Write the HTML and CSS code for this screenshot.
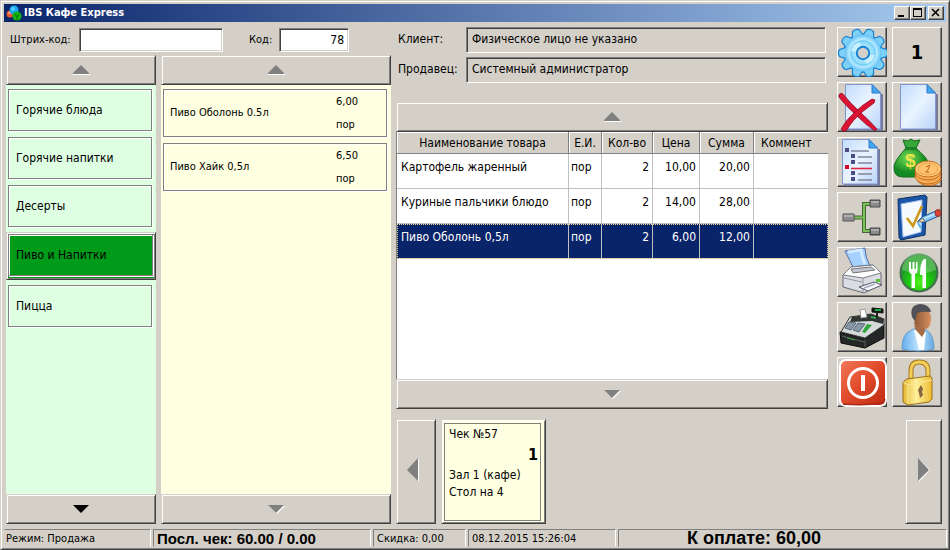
FILE: index.html
```html
<!DOCTYPE html>
<html lang="ru">
<head>
<meta charset="utf-8">
<title>IBS Кафе Express</title>
<link rel="stylesheet" href="styles.css">
</head>
<body>
<div class="window">
  <header class="titlebar">
    <svg class="logo" viewBox="0 0 16 16" aria-hidden="true">
      <circle cx="4" cy="9" r="3.5" fill="#e8562f"/><circle cx="3.5" cy="8" r="1.5" fill="#ff9478"/>
      <circle cx="8" cy="5" r="4.5" fill="#18a8f0"/><circle cx="7" cy="4" r="2" fill="#58ccff"/>
      <circle cx="11" cy="11" r="4.5" fill="#12b312"/><path d="M9 9l2 3 2-3M11 12v3" stroke="#087008" fill="none"/>
    </svg>
    <h1>IBS Кафе Express</h1>
    <button class="sys" aria-label="Свернуть"><svg viewBox="0 0 14 12"><path d="M3 8h6v2H3z"/></svg></button>
    <button class="sys" aria-label="Развернуть"><svg viewBox="0 0 14 12"><path d="M2 1h9v9H2zM3 3v6h7V3z" fill-rule="evenodd"/></svg></button>
    <button class="sys close" aria-label="Закрыть"><svg viewBox="0 0 14 12"><path d="M3 2l7 7M10 2l-7 7" stroke="#000" stroke-width="1.6"/></svg></button>
  </header>

  <main class="workspace">
    <section class="catalog">
      <form class="codes">
        <label for="barcode">Штрих-код:</label>
        <input id="barcode" class="barcode" type="text">
        <label for="code" class="code-label">Код:</label>
        <input id="code" class="code" type="text" value="78">
      </form>
      <div class="lists">
        <div class="panel groups">
          <button class="scroll" aria-label="Группы вверх"><svg class="arrow" viewBox="0 0 17 10"><path d="M0 9h17v1H0z" fill="#fff"/><path d="M8 0l8 8v1H0V8z" fill="#808080"/></svg></button>
          <div class="items">
            <button class="group"><span>Горячие блюда</span></button>
            <button class="group"><span>Горячие напитки</span></button>
            <button class="group"><span>Десерты</span></button>
            <button class="group selected"><span>Пиво и Напитки</span></button>
            <button class="group"><span>Пицца</span></button>
          </div>
          <button class="scroll" aria-label="Группы вниз"><svg class="arrow" viewBox="0 0 17 10"><path d="M0 1h16L8 9z" fill="#000"/></svg></button>
        </div>
        <div class="panel goods">
          <button class="scroll" aria-label="Товары вверх"><svg class="arrow" viewBox="0 0 17 10"><path d="M0 9h17v1H0z" fill="#fff"/><path d="M8 0l8 8v1H0V8z" fill="#808080"/></svg></button>
          <div class="items">
            <button class="good"><span class="name">Пиво Оболонь 0.5л</span><span class="price">6,00</span><span class="unit">пор</span></button>
            <button class="good"><span class="name">Пиво Хайк 0,5л</span><span class="price">6,50</span><span class="unit">пор</span></button>
          </div>
          <button class="scroll" aria-label="Товары вниз"><svg class="arrow" viewBox="0 0 17 10"><path d="M1 2h16L9 10z" fill="#fff"/><path d="M0 1h16L8 9z" fill="#808080"/></svg></button>
        </div>
      </div>
    </section>

    <section class="sale">
      <div class="upper">
        <div class="order">
          <dl class="party">
            <dt>Клиент:</dt><dd>Физическое лицо не указано</dd>
            <dt>Продавец:</dt><dd>Системный администратор</dd>
          </dl>
          <button class="scroll" aria-label="Строки вверх"><svg class="arrow" viewBox="0 0 17 10"><path d="M0 9h17v1H0z" fill="#fff"/><path d="M8 0l8 8v1H0V8z" fill="#808080"/></svg></button>
          <div class="sheet">
            <table>
              <colgroup><col class="c-name"><col class="c-unit"><col class="c-qty"><col class="c-price"><col class="c-sum"><col></colgroup>
              <thead><tr><th>Наименование товара</th><th>Е.И.</th><th>Кол-во</th><th>Цена</th><th>Сумма</th><th class="left">Коммент</th></tr></thead>
              <tbody>
                <tr><td>Картофель жаренный</td><td class="u">пор</td><td class="n">2</td><td class="n">10,00</td><td class="n">20,00</td><td></td></tr>
                <tr><td>Куриные пальчики блюдо</td><td class="u">пор</td><td class="n">2</td><td class="n">14,00</td><td class="n">28,00</td><td></td></tr>
                <tr class="current"><td>Пиво Оболонь 0,5л</td><td class="u">пор</td><td class="n">2</td><td class="n">6,00</td><td class="n">12,00</td><td></td></tr>
              </tbody>
            </table>
          </div>
          <button class="scroll" aria-label="Строки вниз"><svg class="arrow" viewBox="0 0 17 10"><path d="M1 2h16L9 10z" fill="#fff"/><path d="M0 1h16L8 9z" fill="#808080"/></svg></button>
        </div>

        <nav class="tools">
          <button class="tool" aria-label="Настройки"><svg viewBox="0 0 50 50">
            <defs>
              <radialGradient id="gearFill"><stop offset="0" stop-color="#eefcff"/><stop offset=".55" stop-color="#8fdcfb"/><stop offset=".75" stop-color="#b5eaff"/><stop offset="1" stop-color="#62c0f4"/></radialGradient>
              <g id="teeth"><g id="pair"><path id="tooth" d="M21 9l2-6q3-2 6 0l2 6z"/><use href="#tooth" transform="rotate(36 26 26)"/></g>
                <use href="#pair" transform="rotate(72 26 26)"/><use href="#pair" transform="rotate(144 26 26)"/><use href="#pair" transform="rotate(216 26 26)"/><use href="#pair" transform="rotate(288 26 26)"/></g>
            </defs>
            <g transform="rotate(18 26 26)"><use href="#teeth" fill="#1783d4" stroke="#1783d4" stroke-width="2.4"/><circle cx="26" cy="26" r="19.5" fill="#1783d4"/><use href="#teeth" fill="#7fd0f8"/></g>
            <circle cx="26" cy="26" r="18.4" fill="url(#gearFill)"/><circle cx="26" cy="26" r="12" fill="none" stroke="#72cdf5" stroke-width="1.4"/>
            <path d="M14 24a12 12 0 0 1 8-9l3 5a7 7 0 0 0-5 5zM38 28a12 12 0 0 1-8 9l-3-5a7 7 0 0 0 5-4z" fill="#dff7ff" opacity=".7"/>
            <circle cx="26" cy="26" r="6.2" fill="#d4d0c8" stroke="#1783d4" stroke-width="2"/>
          </svg></button>
          <button class="tool number">1</button>

          <button class="tool" aria-label="Удалить чек"><svg viewBox="0 0 50 50">
            <defs><linearGradient id="paper" x1="0" y1="0" x2="1" y2="1"><stop offset="0" stop-color="#c2dcff"/><stop offset=".5" stop-color="#eaf4ff"/><stop offset="1" stop-color="#b9d3fa"/></linearGradient>
            <g id="sheet"><path d="M10 48h35V12" stroke="#777b9a" stroke-width="2" fill="none"/><path d="M8.500 2.500H35L43.500 11v36h-35z" fill="url(#paper)" stroke="#8494cf"/><path d="M35 2.500L43.500 11H35z" fill="#42a8ee" stroke="#2878cc"/></g></defs>
            <use href="#sheet"/>
            <path d="M2 13q1-3 4-1 7 9 17 18 9 8 17 17l-2 2q-9-6-18-15Q8 23 2 15z" fill="#dc1433" stroke="#90102c" stroke-width=".8"/>
            <path d="M35 17l3 1-1 3Q24 30 17 38q-5 6-7 10-4 3-6-1 5-9 13-16 8-8 18-14z" fill="#dc1433" stroke="#90102c" stroke-width=".8"/>
          </svg></button>
          <button class="tool" aria-label="Новый чек"><svg viewBox="0 0 50 50"><use href="#sheet"/></svg></button>

          <button class="tool" aria-label="Список чеков"><svg viewBox="0 0 50 50">
            <g transform="translate(-3 0)"><use href="#sheet"/></g>
            <path d="M14 14h18M21 20h14M21 26h14M21 37h14M21 43h14" stroke="#81869b" stroke-width="1.6"/><path d="M14 31.500h21" stroke="#dd2946" stroke-width="1.6"/>
            <path d="M8 11h4v4H8zM14 17h4v4h-4zM14 23h4v4h-4zM14 34h4v4h-4zM14 40h4v4h-4z" fill="#4a4d83"/><path d="M8 28h4v4H8z" fill="#d10b2e"/>
          </svg></button>
          <button class="tool" aria-label="Оплата"><svg viewBox="0 0 50 50">
            <defs><radialGradient id="bag" cx=".4" cy=".35"><stop offset="0" stop-color="#72dc57"/><stop offset="1" stop-color="#148a22"/></radialGradient></defs>
            <path d="M14 11C7 19 2 25 2 31q0 9 9 9h18q8-1 8-10c0-8-7-13-13-19z" fill="url(#bag)" stroke="#116d1b"/>
            <path d="M14 11L11 3l5 1 3-2 3 2 6-1-4 8z" fill="#37a83a" stroke="#116d1b"/><path d="M13 10h12v3H13z" fill="#1e8126"/>
            <text x="13" y="30" class="dollar">$</text>
            <g stroke="#c56c20" fill="#f5ae55"><ellipse cx="37" cy="42" rx="12" ry="6.500"/><ellipse cx="36" cy="39" rx="13" ry="8"/><ellipse cx="36" cy="35" rx="13" ry="8"/><ellipse cx="36" cy="32" rx="13" ry="8" fill="#ffd383"/></g>
            <ellipse cx="36" cy="32" rx="10" ry="6" fill="#ffc46b" stroke="#e79b43"/><path d="M38 28l-3 7M34 30l4-2M33 35h4" stroke="#bb6420" fill="none"/>
          </svg></button>

          <button class="tool" aria-label="Разделить чек"><svg viewBox="0 0 50 50">
            <defs><linearGradient id="steel" x2="0" y2="1"><stop offset="0" stop-color="#666"/><stop offset=".45" stop-color="#bbb"/><stop offset="1" stop-color="#444"/></linearGradient></defs>
            <path d="M17 25.500h10M33 12h-6v27h6" fill="none" stroke="#48663c" stroke-width="4"/><path d="M17 25.500h10M33 12h-6v27h6" fill="none" stroke="#7bc457" stroke-width="2"/>
            <g fill="url(#steel)" stroke="#4b4b4b"><path d="M6 22h11v7H6zM33 8h10v7H33zM33 36h10v7H33z"/></g>
            <path d="M7 23h9v5H7zM34 9h8v5h-8zM34 37h8v5h-8z" fill="#8c8c8c"/><path d="M7 24h9M34 10h8M34 38h8" stroke="#d0d0d0"/>
          </svg></button>
          <button class="tool" aria-label="Заметка"><svg viewBox="0 0 50 50">
            <path d="M6 7l27-4 2 2-2 38-24 5-2-2z" fill="#1b55a8" stroke="#103365"/><path d="M9 12l21-4-1 32-18 5z" fill="#f5faff" stroke="#a0bce8"/><path d="M15 26l6 8 9-20" fill="none" stroke="#cf981b" stroke-width="2.6"/>
            <path d="M26 29l4-4 14-6 3 5-14 6z" fill="#8fccf5" stroke="#1d5595"/><path d="M31 27l14-6" stroke="#e2f4ff"/><path d="M25 30l6-4 2 4z" fill="#f0d3a5" stroke="#264f7e" stroke-width=".7"/><ellipse cx="46" cy="21" rx="3" ry="3.500" fill="#d94435" stroke="#903329"/><path d="M26 31l3 5" stroke="#58b6ef" stroke-width="2"/>
          </svg></button>

          <button class="tool" aria-label="Печать"><svg viewBox="0 0 50 50">
            <path d="M8 4l20-3q0 9 5 18l-16 3Q12 12 8 4z" fill="#a5d0ff" stroke="#526ca6"/><path d="M11 5l13-2q1 8 4 14" fill="none" stroke="#d2e9ff" stroke-width="3"/>
            <path d="M6 28l8-8 22-2 8 8v11L27 46 6 40z" fill="#dcdde2" stroke="#666a76"/><path d="M6 28l8-8 22-2 8 8-18 5z" fill="#fff" stroke="#777b88"/><path d="M14 22l20-2 4 3-22 3z" fill="#c3c6d0" stroke="#777"/>
            <path d="M26 31v14M7 31l18 4" stroke="#9598a2"/><path d="M22 40l15-5 8 3-14 6z" fill="#f7f8ff" stroke="#555968"/><path d="M27 41l11-4" stroke="#aab" stroke-width="1.500"/><path d="M39 32h4v3h-4z" fill="#57c532"/>
          </svg></button>
          <button class="tool" aria-label="Кухня"><svg viewBox="0 0 50 50">
            <defs><radialGradient id="green" cy=".75"><stop offset="0" stop-color="#52f31c"/><stop offset=".6" stop-color="#1dc610"/><stop offset="1" stop-color="#219b26"/></radialGradient></defs>
            <circle cx="27" cy="26" r="18.500" fill="url(#green)" stroke="#456e51" stroke-width="2"/><path d="M10 23a17 17 0 0 1 34 0q-17 7-34 0z" fill="#85d681" opacity=".5"/>
            <path d="M17 15v8q0 3 2.500 4v14h3.500V27q2.500-1 2.500-4v-8H24v7h-1.500v-7h-2v7H19v-7zM32 12q-4 3-4 16h2.500v13H34V13q0-2-2-1z" fill="#fff"/>
          </svg></button>

          <button class="tool" aria-label="Касса"><svg viewBox="0 0 50 50">
            <path d="M3 30l25 7 19-15v14L28 46 4 41z" fill="#252726" stroke="#0c0d0c"/><path d="M4 30L13 15l21-3 13 5v6L28 36z" fill="#d7dada" stroke="#333"/>
            <path d="M15 15l19-3 13 5-1 5-11-3-22 1z" fill="#303633"/><path d="M35 6l11 1v4l-11-1z" fill="#131a17" stroke="#111"/><path d="M40 11v5" stroke="#222" stroke-width="2"/><path d="M38 8h6" stroke="#2bd35b" stroke-width="1.500"/><path d="M34 15l5 1" stroke="#28cb54" stroke-width="1.500"/>
            <path d="M23 8l5-1 2 8-6 1z" fill="#fff" stroke="#999"/><path d="M12 20l7 1-5 7-6-2zM21 21l7 1-6 8-6-2z" fill="#8797a7" stroke="#556777"/><path d="M30 22l5 1-7 8-3-1z" fill="#32a43c"/><path d="M5 34l22 6M28 38v7" stroke="#58615b"/><path d="M10 36l8 2" stroke="#34a544"/>
          </svg></button>
          <button class="tool" aria-label="Клиент"><svg viewBox="0 0 50 50">
            <defs><linearGradient id="skin"><stop offset="0" stop-color="#8b5432"/><stop offset="1" stop-color="#d79061"/></linearGradient><linearGradient id="shirt"><stop offset="0" stop-color="#64aeee"/><stop offset=".5" stop-color="#bde2ff"/><stop offset="1" stop-color="#69aae4"/></linearGradient></defs>
            <path d="M10 47q0-15 8-18l8-4 8 3q8 4 8 19-16 4-32 0z" fill="url(#shirt)" stroke="#659ac9"/><path d="M22 28l12 2-2 18h-5z" fill="#fff"/><path d="M22 20h10l1 10-3 5-7-8z" fill="#a56b45"/>
            <path d="M21 12q2-7 11-5 8 2 7 11-1 9-6 9-9-1-11-10z" fill="url(#skin)"/><path d="M20 15q-3-12 8-13 9 0 11 8-9-1-14 1l-2 8z" fill="#505057"/>
          </svg></button>

          <button class="tool" aria-label="Выход"><svg viewBox="0 0 50 50">
            <defs><linearGradient id="red" x2="1" y2="1"><stop offset="0" stop-color="#f4795c"/><stop offset=".5" stop-color="#e04a2a"/><stop offset="1" stop-color="#bd2810"/></linearGradient></defs>
            <rect x="3" y="3" width="46" height="46" rx="6" fill="url(#red)" stroke="#fff" stroke-width="2"/><path d="M6 47q20 2 40-1l2-4" fill="none" stroke="#a92818" stroke-width="1.500"/><circle cx="26" cy="26" r="14.500" fill="none" stroke="#fff" stroke-width="3"/><path d="M24 18h4v16h-4z" fill="#fff"/>
          </svg></button>
          <button class="tool" aria-label="Блокировка"><svg viewBox="0 0 50 50">
            <defs><linearGradient id="gold"><stop offset="0" stop-color="#e6b730"/><stop offset=".45" stop-color="#fff09b"/><stop offset="1" stop-color="#ecbb32"/></linearGradient></defs>
            <path d="M19 25V14q0-9 8-9 9 0 9 9v8" fill="none" stroke="#a87a1c" stroke-width="5"/><path d="M19 25V14q0-9 8-9 9 0 9 9v8" fill="none" stroke="#f3ce58" stroke-width="3"/>
            <path d="M11 25l4-3 23-3 2 2v21l-3 3-21 3-5-3z" fill="url(#gold)" stroke="#98701c"/><path d="M11 25l5 3 24-5M16 28v19" fill="none" stroke="#f9e99a"/><path d="M29 28l2 4-1 3 1 3-3 3-1-5-1-3z" fill="#846642"/>
          </svg></button>
        </nav>
      </div>

      <div class="receipts">
        <button class="side prev" aria-label="Предыдущие чеки"><svg viewBox="0 0 12 24"><path d="M11 1h1v23l-1-1z" fill="#fff"/><path d="M11 0v23L0 12z" fill="#808080"/></svg></button>
        <button class="receipt"><span class="receipt-body"><span>Чек №57</span><strong>1</strong><span>Зал 1 (кафе)</span><span>Стол на 4</span></span></button>
        <button class="side next" aria-label="Следующие чеки"><svg viewBox="0 0 12 24"><path d="M1 1l11 11L1 24z" fill="#fff"/><path d="M0 0v23l11-11z" fill="#808080"/></svg></button>
      </div>
    </section>
  </main>

  <footer class="status">
    <span class="mode">Режим: Продажа</span>
    <strong class="last">Посл. чек: 60.00 / 0.00</strong>
    <span class="discount">Скидка: 0,00</span>
    <time class="clock" datetime="2015-12-08T15:26:04">08.12.2015 15:26:04</time>
    <strong class="total">К оплате: 60,00</strong>
  </footer>
</div>
</body>
</html>
```
FILE: styles.css
```css
:root {
  --face: #d4d0c8;
  --shade: #808080;
  --dark: #404040;
  --cream: #ffffe1;
  --mint: #dfffe3;
}

* { box-sizing: border-box; }

body {
  margin: 0;
  background: var(--face);
  color: #000;
  font: 12px/16px "DejaVu Sans Condensed", "DejaVu Sans", sans-serif;
}

button, input { font: inherit; color: inherit; border-radius: 0; }
button { margin: 0; padding: 0; background: var(--face); border: 0; }
svg { display: block; }

.window {
  display: flex;
  flex-direction: column;
  min-height: 100vh;
  padding: 3px 2px 2px 3px;
  border: 1px solid var(--face);
  border-right-color: var(--dark);
  border-bottom-color: var(--dark);
  box-shadow: inset 1px 1px 0 #fff, inset -1px -1px 0 var(--shade);
}

/* Title bar */
.titlebar {
  display: flex;
  align-items: center;
  height: 18px;
  margin-right: 1px;
  padding: 0 2px;
  background: linear-gradient(90deg, #0a246a, #a6caf0);
  color: #fff;
}
.logo { width: 16px; height: 16px; margin-right: 2px; }
.titlebar h1 { flex: 1; margin: 0; font-size: 11px; line-height: 16px; }
.sys {
  width: 16px;
  height: 14px;
  border: 1px solid;
  border-color: #fff var(--dark) var(--dark) #fff;
  box-shadow: inset -1px -1px 0 var(--shade);
}
.sys.close { margin-left: 2px; }

.workspace { display: flex; flex: 1; gap: 5px; padding: 5px 5px 5px 2px; }

/* Catalogue */
.catalog { display: flex; flex-direction: column; flex: none; width: 385px; }
.codes { display: flex; align-items: center; height: 28px; padding: 0 0 3px 4px; }
.codes label { flex: none; width: 69px; font-size: 11px; }
.codes .code-label { width: 30px; margin-left: 26px; }
.codes input {
  height: 24px;
  padding: 0 4px;
  background: #fff;
  border: 1px solid;
  border-color: var(--shade) #fff #fff var(--shade);
  box-shadow: inset 1px 1px 0 var(--dark), inset -1px -1px 0 var(--face);
}
.codes .barcode { width: 144px; }
.codes .code { width: 70px; text-align: right; }

.lists { display: flex; flex: 1; gap: 5px; }
.panel { display: flex; flex-direction: column; }
.panel .items { flex: 1; }
.groups { width: 150px; background: var(--mint); }
.goods { flex: 1; background: var(--cream); }
.groups .items { padding-top: 1px; }
.goods .items { padding: 4px 4px 4px 2px; }

.scroll, .side, .receipt, .group.selected {
  border: 1px solid;
  border-color: var(--face) var(--dark) var(--dark) var(--face);
  box-shadow: inset 1px 1px 0 #fff, inset -1px -1px 0 var(--shade);
}
.scroll { display: flex; flex: none; align-items: center; justify-content: center; height: 30px; width: 100%; }
.arrow { width: 17px; height: 10px; }

.group {
  display: block;
  width: 100%;
  height: 48px;
  padding: 3px 4px 3px 2px;
  background: transparent;
  text-align: left;
}
.group span {
  display: flex;
  align-items: center;
  height: 42px;
  padding: 0 7px;
  border: 1px solid var(--shade);
  box-shadow: 1px 1px 0 #fff, inset 1px 1px 0 #fff;
}
.group.selected { margin: 2px 0; padding: 1px 2px 3px 1px; background: #009b19; }

.good {
  display: grid;
  grid-template-columns: 1fr 50px;
  grid-template-rows: 1fr 1fr;
  align-items: center;
  width: 100%;
  height: 48px;
  margin-bottom: 6px;
  padding-left: 6px;
  background: var(--cream);
  border: 1px solid var(--shade);
  box-shadow: 1px 1px 0 #fff, inset 1px 1px 0 #fff;
  font-size: 11px;
  text-align: left;
}
.good .name { grid-row: 1 / 3; }

/* Current sale */
.sale { display: flex; flex: 1; flex-direction: column; min-width: 0; }
.upper { display: flex; flex: 1; gap: 9px; }
.order { display: flex; flex: 1; flex-direction: column; min-width: 0; }
.party {
  display: grid;
  grid-template-columns: 68px 1fr;
  grid-auto-rows: 26px;
  gap: 4px 0;
  margin: 0 2px 19px;
}
.party dt { line-height: 24px; }
.party dd {
  margin: 0;
  padding: 0 5px;
  border: 1px solid;
  border-color: var(--shade) #fff #fff var(--shade);
  box-shadow: inset 1px 1px 0 var(--dark);
  line-height: 22px;
}
.sheet { flex: 1; background: #fff; border-left: 1px solid var(--shade); }
.sheet table { width: 100%; border-collapse: separate; border-spacing: 0; table-layout: fixed; }
.c-name { width: 172px; }
.c-unit { width: 33px; }
.c-qty { width: 51px; }
.c-price { width: 47px; }
.c-sum { width: 54px; }
.sheet th {
  height: 22px;
  padding: 0;
  background: var(--face);
  border-right: 1px solid var(--shade);
  border-bottom: 1px solid var(--shade);
  box-shadow: inset 1px 1px 0 #fff;
  font-weight: normal;
}
.sheet th.left { padding-left: 7px; border-right: 0; text-align: left; }
.sheet td {
  height: 35px;
  padding: 5px 4px;
  border-right: 1px solid #c0c0c0;
  border-bottom: 1px solid #c0c0c0;
  vertical-align: top;
  white-space: nowrap;
}
.sheet td:last-child { border-right: 0; }
.sheet .u { padding-left: 2px; padding-right: 0; }
.sheet .n { padding-right: 3px; text-align: right; }
.sheet .current { background: #0a246a; color: #fff; outline: 1px dotted #f5db95; outline-offset: -1px; }

/* Tool buttons */
.tools { display: grid; grid-template-columns: 50px 50px; grid-auto-rows: 50px; gap: 5px; align-content: start; }
.tool {
  border: 1px solid;
  border-color: #fff var(--dark) var(--dark) #fff;
  box-shadow: inset -1px -1px 0 var(--shade);
}
.tool svg { width: 50px; height: 50px; margin: -1px; }
.tool.number { font-size: 20px; font-weight: bold; }
.dollar { font: bold 19px "Liberation Sans", sans-serif; fill: #f0e44a; }

/* Open receipts */
.receipts { display: flex; gap: 5px; height: 105px; margin-top: 10px; }
.side { display: flex; align-items: center; justify-content: center; padding-bottom: 3px; }
.side svg { width: 12px; height: 24px; }
.prev { width: 40px; padding-right: 6px; }
.next { width: 37px; margin-left: auto; }
.receipt { width: 105px; padding: 2px 4px 2px 2px; background: var(--cream); }
.receipt-body {
  display: flex;
  flex-direction: column;
  height: 98px;
  padding: 2px 2px 2px 4px;
  border: 1px solid var(--shade);
  line-height: 17px;
  text-align: left;
}
.receipt-body strong { font-size: 16px; line-height: 24px; text-align: right; }

/* Status bar */
.status { display: flex; gap: 2px; height: 18px; font-size: 11px; line-height: 17px; white-space: nowrap; }
.status > * {
  padding: 0 3px;
  border: 1px solid;
  border-color: var(--shade) #fff var(--face) var(--shade);
}
.status .mode { width: 147px; padding-left: 1px; border-left-color: var(--face); }
.status .last { width: 218px; }
.status .discount { width: 93px; }
.status .clock { width: 148px; }
.status strong { font-family: "Liberation Sans", sans-serif; font-size: 15px; }
.status .total { flex: 1; padding-right: 60px; font-size: 18px; text-align: center; }
```
